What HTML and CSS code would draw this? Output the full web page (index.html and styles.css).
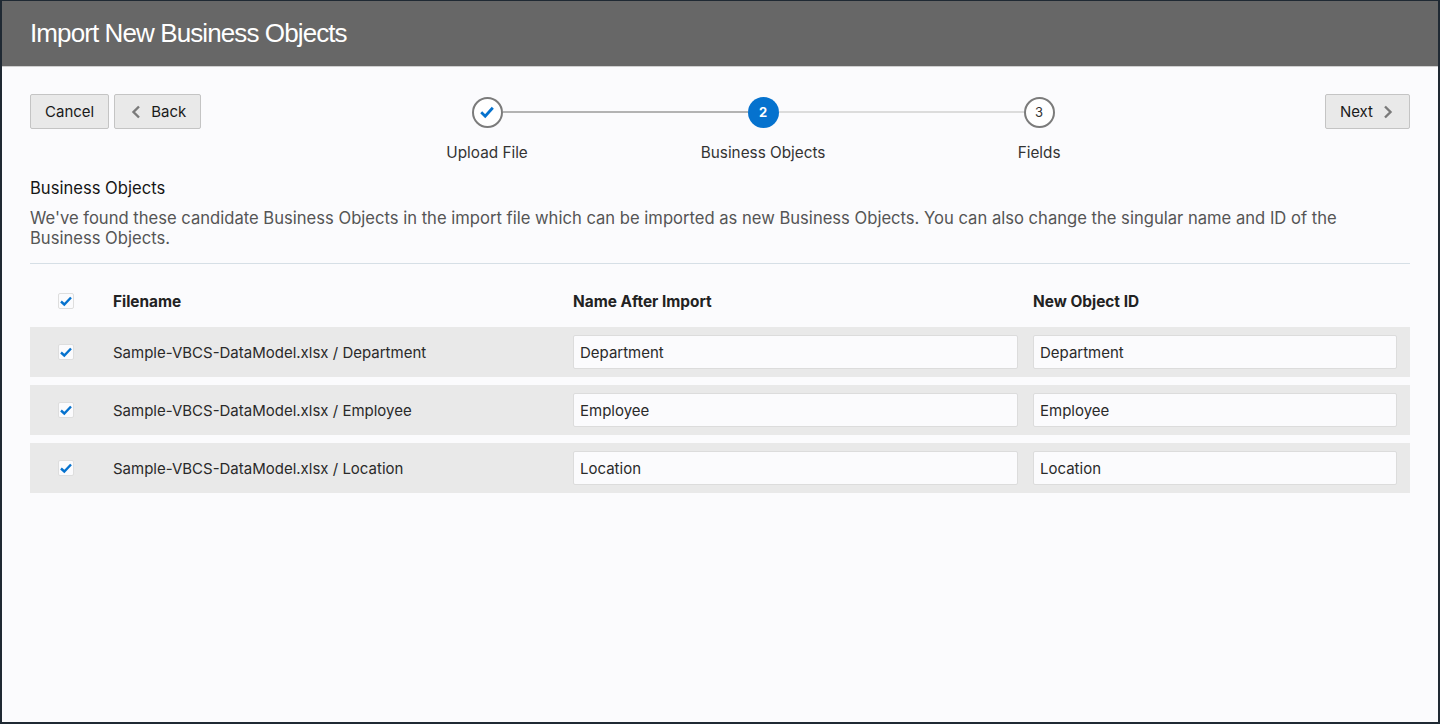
FILE: index.html
```html
<!DOCTYPE html>
<html lang="en">
<head>
<meta charset="utf-8">
<title>Import New Business Objects</title>
<link rel="stylesheet" href="styles.css">
</head>
<body>
<div class="window">
  <header class="titlebar">
    <h1 class="title">Import New Business Objects</h1>
  </header>
  <main class="content">
    <div class="toolbar">
      <div class="btn-group">
        <button class="btn" type="button">Cancel</button>
        <button class="btn btn-back" type="button">
          <svg class="chev" width="10" height="14" viewBox="0 0 10 14"><path d="M8 1.5L2.5 7L8 12.5" fill="none" stroke="#7a7a7a" stroke-width="2.4"/></svg>
          <span>Back</span>
        </button>
      </div>
      <div class="train">
        <div class="step">
          <div class="track">
            <span class="line line-none"></span>
            <span class="dot dot-done">
              <svg width="16" height="14" viewBox="0 0 16 14"><path d="M2.2 7.3L6.2 11.2L13.8 2.8" fill="none" stroke="#0572ce" stroke-width="2.8"/></svg>
            </span>
            <span class="line line-done"></span>
          </div>
          <div class="step-label">Upload File</div>
        </div>
        <div class="step">
          <div class="track">
            <span class="line line-done"></span>
            <span class="dot dot-current">2</span>
            <span class="line line-todo"></span>
          </div>
          <div class="step-label">Business Objects</div>
        </div>
        <div class="step">
          <div class="track">
            <span class="line line-todo"></span>
            <span class="dot dot-todo">3</span>
            <span class="line line-none"></span>
          </div>
          <div class="step-label">Fields</div>
        </div>
      </div>
      <div class="btn-group">
        <button class="btn btn-next" type="button">
          <span>Next</span>
          <svg class="chev" width="10" height="14" viewBox="0 0 10 14"><path d="M2 1.5L7.5 7L2 12.5" fill="none" stroke="#7a7a7a" stroke-width="2.4"/></svg>
        </button>
      </div>
    </div>

    <h2 class="section-title">Business Objects</h2>
    <p class="section-desc">We've found these candidate Business Objects in the import file which can be imported as new Business Objects. You can also change the singular name and ID of the Business Objects.</p>

    <div class="table">
      <div class="row head">
        <div class="cell cell-check"><span class="checkbox"><svg width="14" height="12" viewBox="0 0 14 12"><path d="M2 6.5L5.3 9.5L12 2.5" fill="none" stroke="#0572ce" stroke-width="2.4"/></svg></span></div>
        <div class="cell">Filename</div>
        <div class="cell">Name After Import</div>
        <div class="cell">New Object ID</div>
      </div>
      <div class="row item">
        <div class="cell cell-check"><span class="checkbox"><svg width="14" height="12" viewBox="0 0 14 12"><path d="M2 6.5L5.3 9.5L12 2.5" fill="none" stroke="#0572ce" stroke-width="2.4"/></svg></span></div>
        <div class="cell">Sample-VBCS-DataModel.xlsx / Department</div>
        <div class="cell cell-name"><input class="field" type="text" value="Department"></div>
        <div class="cell cell-id"><input class="field" type="text" value="Department"></div>
      </div>
      <div class="row item">
        <div class="cell cell-check"><span class="checkbox"><svg width="14" height="12" viewBox="0 0 14 12"><path d="M2 6.5L5.3 9.5L12 2.5" fill="none" stroke="#0572ce" stroke-width="2.4"/></svg></span></div>
        <div class="cell">Sample-VBCS-DataModel.xlsx / Employee</div>
        <div class="cell cell-name"><input class="field" type="text" value="Employee"></div>
        <div class="cell cell-id"><input class="field" type="text" value="Employee"></div>
      </div>
      <div class="row item">
        <div class="cell cell-check"><span class="checkbox"><svg width="14" height="12" viewBox="0 0 14 12"><path d="M2 6.5L5.3 9.5L12 2.5" fill="none" stroke="#0572ce" stroke-width="2.4"/></svg></span></div>
        <div class="cell">Sample-VBCS-DataModel.xlsx / Location</div>
        <div class="cell cell-name"><input class="field" type="text" value="Location"></div>
        <div class="cell cell-id"><input class="field" type="text" value="Location"></div>
      </div>
    </div>
  </main>
</div>
</body>
</html>
```

FILE: styles.css
```css
* { box-sizing: border-box; }

html, body {
  margin: 0;
  padding: 0;
  height: 100%;
}

body {
  background: #1f2933;
  font-family: Inter, "Liberation Sans", Arial, sans-serif;
  color: #333;
  overflow: hidden;
}

.window {
  margin: 1px 2px 2px 2px;
  height: 721px;
  background: #fbfbfd;
  display: flex;
  flex-direction: column;
}

.titlebar {
  height: 66px;
  background: #676767;
  border-bottom: 1px solid #cfcfcf;
  display: flex;
  align-items: center;
  padding-left: 28px;
  flex-shrink: 0;
}

.title {
  margin: 0;
  font-family: "Liberation Sans", Arial, sans-serif;
  font-size: 26px;
  font-weight: normal;
  color: #ffffff;
  letter-spacing: -0.9px;
}

.content {
  flex: 1;
  padding: 27px 28px 0 28px;
}

.toolbar {
  display: flex;
  align-items: flex-start;
}

.btn-group {
  display: flex;
  gap: 5px;
}

.btn {
  height: 35px;
  padding: 0 14px;
  border: 1px solid #c4c4c4;
  border-radius: 2px;
  background: #e9e9e9;
  font-family: Inter, "Liberation Sans", Arial, sans-serif;
  font-size: 15px;
  color: #1a1a1a;
  display: inline-flex;
  align-items: center;
  gap: 10px;
}

.btn-back { padding-left: 16px; padding-right: 14px; }
.btn-next { padding-left: 14px; padding-right: 16px; }

.train {
  flex: 1;
  display: flex;
  justify-content: center;
  padding-top: 3px;
}

.step {
  width: 276px;
  display: flex;
  flex-direction: column;
  align-items: center;
}

.track {
  width: 100%;
  display: flex;
  align-items: center;
  height: 30px;
}

.line {
  flex: 1;
  height: 2px;
}
.line-none { background: transparent; }
.line-done { background: #b3b3b3; }
.line-todo { background: #dcdcdc; }

.dot {
  width: 31px;
  height: 31px;
  border-radius: 50%;
  display: flex;
  align-items: center;
  justify-content: center;
  flex-shrink: 0;
  font-size: 13px;
}

.dot-done {
  border: 2px solid #7b7b7b;
  background: #fff;
}

.dot-current {
  background: #0572ce;
  color: #fff;
  font-weight: bold;
}

.dot-todo {
  border: 2px solid #7b7b7b;
  background: #fff;
  color: #333;
}

.step-label {
  margin-top: 16px;
  font-size: 15.3px;
  color: #333;
}

.section-title {
  margin: 16px 0 0 0;
  font-size: 16.6px;
  font-weight: normal;
  color: #161616;
}

.section-desc {
  margin: 10px 0 0 0;
  font-size: 16.6px;
  line-height: 20px;
  color: #555;
  padding-bottom: 15px;
  border-bottom: 1px solid #d6dfe6;
}

.table {
  margin-top: 20px;
  display: flex;
  flex-direction: column;
  gap: 8px;
}

.row {
  display: grid;
  grid-template-columns: 83px 460px 460px 1fr;
  align-items: center;
}

.row.head {
  height: 34px;
  font-weight: bold;
  font-size: 15.4px;
  color: #222;
  margin-bottom: 1px;
}

.row.item {
  height: 50px;
  background: #e9e9e9;
  font-size: 15px;
  color: #2a2a2a;
}

.cell-check {
  padding-left: 28px;
  display: flex;
  align-items: center;
}

.checkbox {
  width: 16px;
  height: 16px;
  background: #fbfbfd;
  border: 1px solid #dedede;
  border-radius: 2px;
  display: flex;
  align-items: center;
  justify-content: center;
}

.cell-name { padding-right: 15px; }
.cell-id { padding-right: 13px; }

.field {
  width: 100%;
  height: 34px;
  border: 1px solid #dcdcdc;
  border-radius: 2px;
  background: #fbfbfd;
  padding: 0 6px;
  font-family: Inter, "Liberation Sans", Arial, sans-serif;
  font-size: 15px;
  color: #2a2a2a;
  outline: none;
}
```
